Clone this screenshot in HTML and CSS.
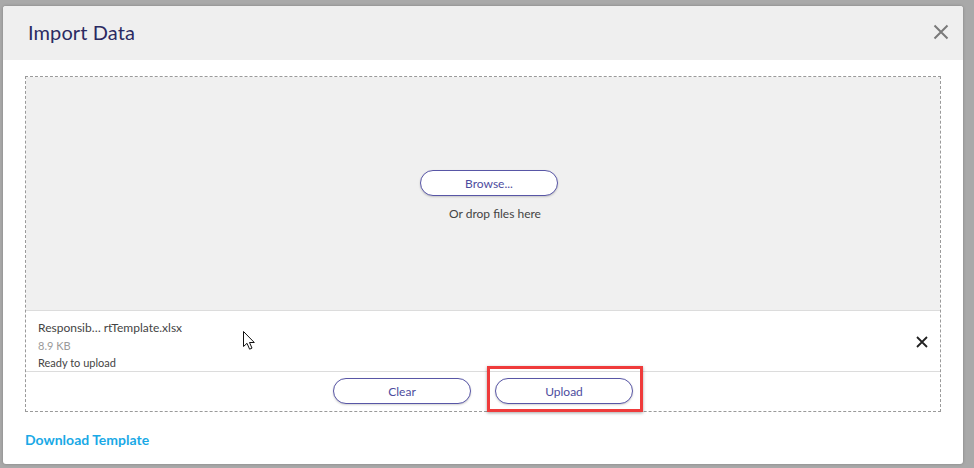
FILE: index.html
```html
<!DOCTYPE html>
<html>
<head>
<meta charset="utf-8">
<link rel="stylesheet" href="styles.css">
</head>
<body>
<div class="backdrop">
  <div class="modal">
    <div class="modal-header">
      <h1 class="title">Import Data</h1>
      <button class="close" aria-label="Close">
        <svg width="16" height="16" viewBox="0 0 16 16"><path d="M1.5 1.5 L14.5 14.5 M14.5 1.5 L1.5 14.5" stroke="#7a7a7a" stroke-width="2" fill="none"/></svg>
      </button>
    </div>
    <div class="modal-body">
      <div class="upload-zone">
        <div class="drop-area">
          <button class="pill">Browse...</button>
          <div class="drop-hint">Or drop files here</div>
        </div>
        <div class="file-row">
          <div class="file-info">
            <div class="file-name">Responsib… rtTemplate.xlsx</div>
            <div class="file-size">8.9 KB</div>
            <div class="file-status">Ready to upload</div>
          </div>
          <button class="remove" aria-label="Remove">
            <svg width="12" height="12" viewBox="0 0 12 12"><path d="M1 1 L11 11 M11 1 L1 11" stroke="#222" stroke-width="1.8" fill="none"/></svg>
          </button>
          <svg class="cursor" width="14" height="20" viewBox="0 0 14 20"><path d="M0.5 0.5 L0.5 15.5 L4 12.3 L6.6 18.2 L9 17.1 L6.5 11.5 L11.3 11.5 Z" fill="#fff" stroke="#111" stroke-width="1" stroke-linejoin="round"/></svg>
        </div>
        <div class="actions">
          <button class="pill">Clear</button>
          <div class="highlight-wrap">
            <button class="pill">Upload</button>
            <div class="highlight"></div>
          </div>
        </div>
      </div>
      <a class="download" href="#">Download Template</a>
    </div>
  </div>
</div>
</body>
</html>
```
FILE: styles.css
```css
html, body {
  margin: 0;
  padding: 0;
}
body {
  background: #a9a9a9;
  font-family: Lato, "Open Sans", "Liberation Sans", sans-serif;
  width: 974px;
  height: 468px;
  overflow: hidden;
}
.backdrop {
  padding: 6px 0 0 3px;
}
.modal {
  width: 960px;
  height: 458px;
  background: #fff;
  border-radius: 3px;
  overflow: hidden;
  box-shadow: 0 0 3px rgba(0,0,0,0.25);
}
.modal-header {
  height: 54px;
  background: #efefef;
  display: flex;
  align-items: center;
  justify-content: space-between;
  padding: 0 14px 0 25px;
}
.title {
  margin: 0;
  font-size: 20px;
  font-weight: 400;
  color: #2b2a62;
  letter-spacing: 0.1px;
  position: relative;
  top: -1px;
}
.close {
  background: none;
  border: 0;
  padding: 0;
  width: 16px;
  height: 16px;
  display: flex;
  position: relative;
  top: -1px;
}
.modal-body {
  padding: 16px 22px 0 22px;
}
.upload-zone {
  border: 1px dashed #9a9a9a;
  height: 334px;
  display: flex;
  flex-direction: column;
}
.drop-area {
  height: 234px;
  background: #f0f0f0;
  border-bottom: 1px solid #dcdcdc;
  display: flex;
  flex-direction: column;
  align-items: center;
  padding-top: 93px;
  padding-left: 12px;
  box-sizing: border-box;
}
.pill {
  width: 138px;
  height: 26px;
  border: 1px solid #5856a6;
  border-radius: 13px;
  background: #fff;
  color: #4d4c9e;
  font-family: Lato, "Open Sans", "Liberation Sans", sans-serif;
  font-size: 12px;
  padding: 0;
  box-shadow: 0 1px 2px rgba(0,0,0,0.18);
}
.drop-hint {
  margin-top: 10px;
  margin-left: 12px;
  font-size: 12px;
  color: #444;
}
.file-row {
  height: 60px;
  border-bottom: 1px solid #dcdcdc;
  display: flex;
  align-items: center;
  justify-content: space-between;
  padding: 0 12px 0 12px;
  position: relative;
}
.file-info {
  display: flex;
  flex-direction: column;
  padding-top: 8px;
}
.file-name {
  font-size: 12px;
  color: #444;
  line-height: 18px;
}
.file-size {
  font-size: 11px;
  color: #9a9a9a;
  line-height: 17px;
}
.file-status {
  font-size: 11px;
  color: #444;
  line-height: 17px;
}
.remove {
  background: none;
  border: 0;
  padding: 0;
  width: 12px;
  height: 12px;
  display: flex;
  position: relative;
  top: 1px;
}
.cursor {
  position: absolute;
  left: 217px;
  top: 20px;
}
.actions {
  flex: 1;
  display: flex;
  justify-content: center;
  align-items: flex-start;
  gap: 24px;
  padding-top: 6px;
}
.highlight-wrap {
  position: relative;
}
.highlight {
  position: absolute;
  left: -8px;
  top: -12px;
  right: -10px;
  bottom: -8px;
  border: 3px solid #ef3b3b;
  box-shadow: 0 1px 3px rgba(0,0,0,0.35);
  pointer-events: none;
}
.download {
  display: inline-block;
  margin-top: 19px;
  font-size: 14px;
  font-weight: 700;
  color: #1aa9e6;
  text-decoration: none;
}
```
